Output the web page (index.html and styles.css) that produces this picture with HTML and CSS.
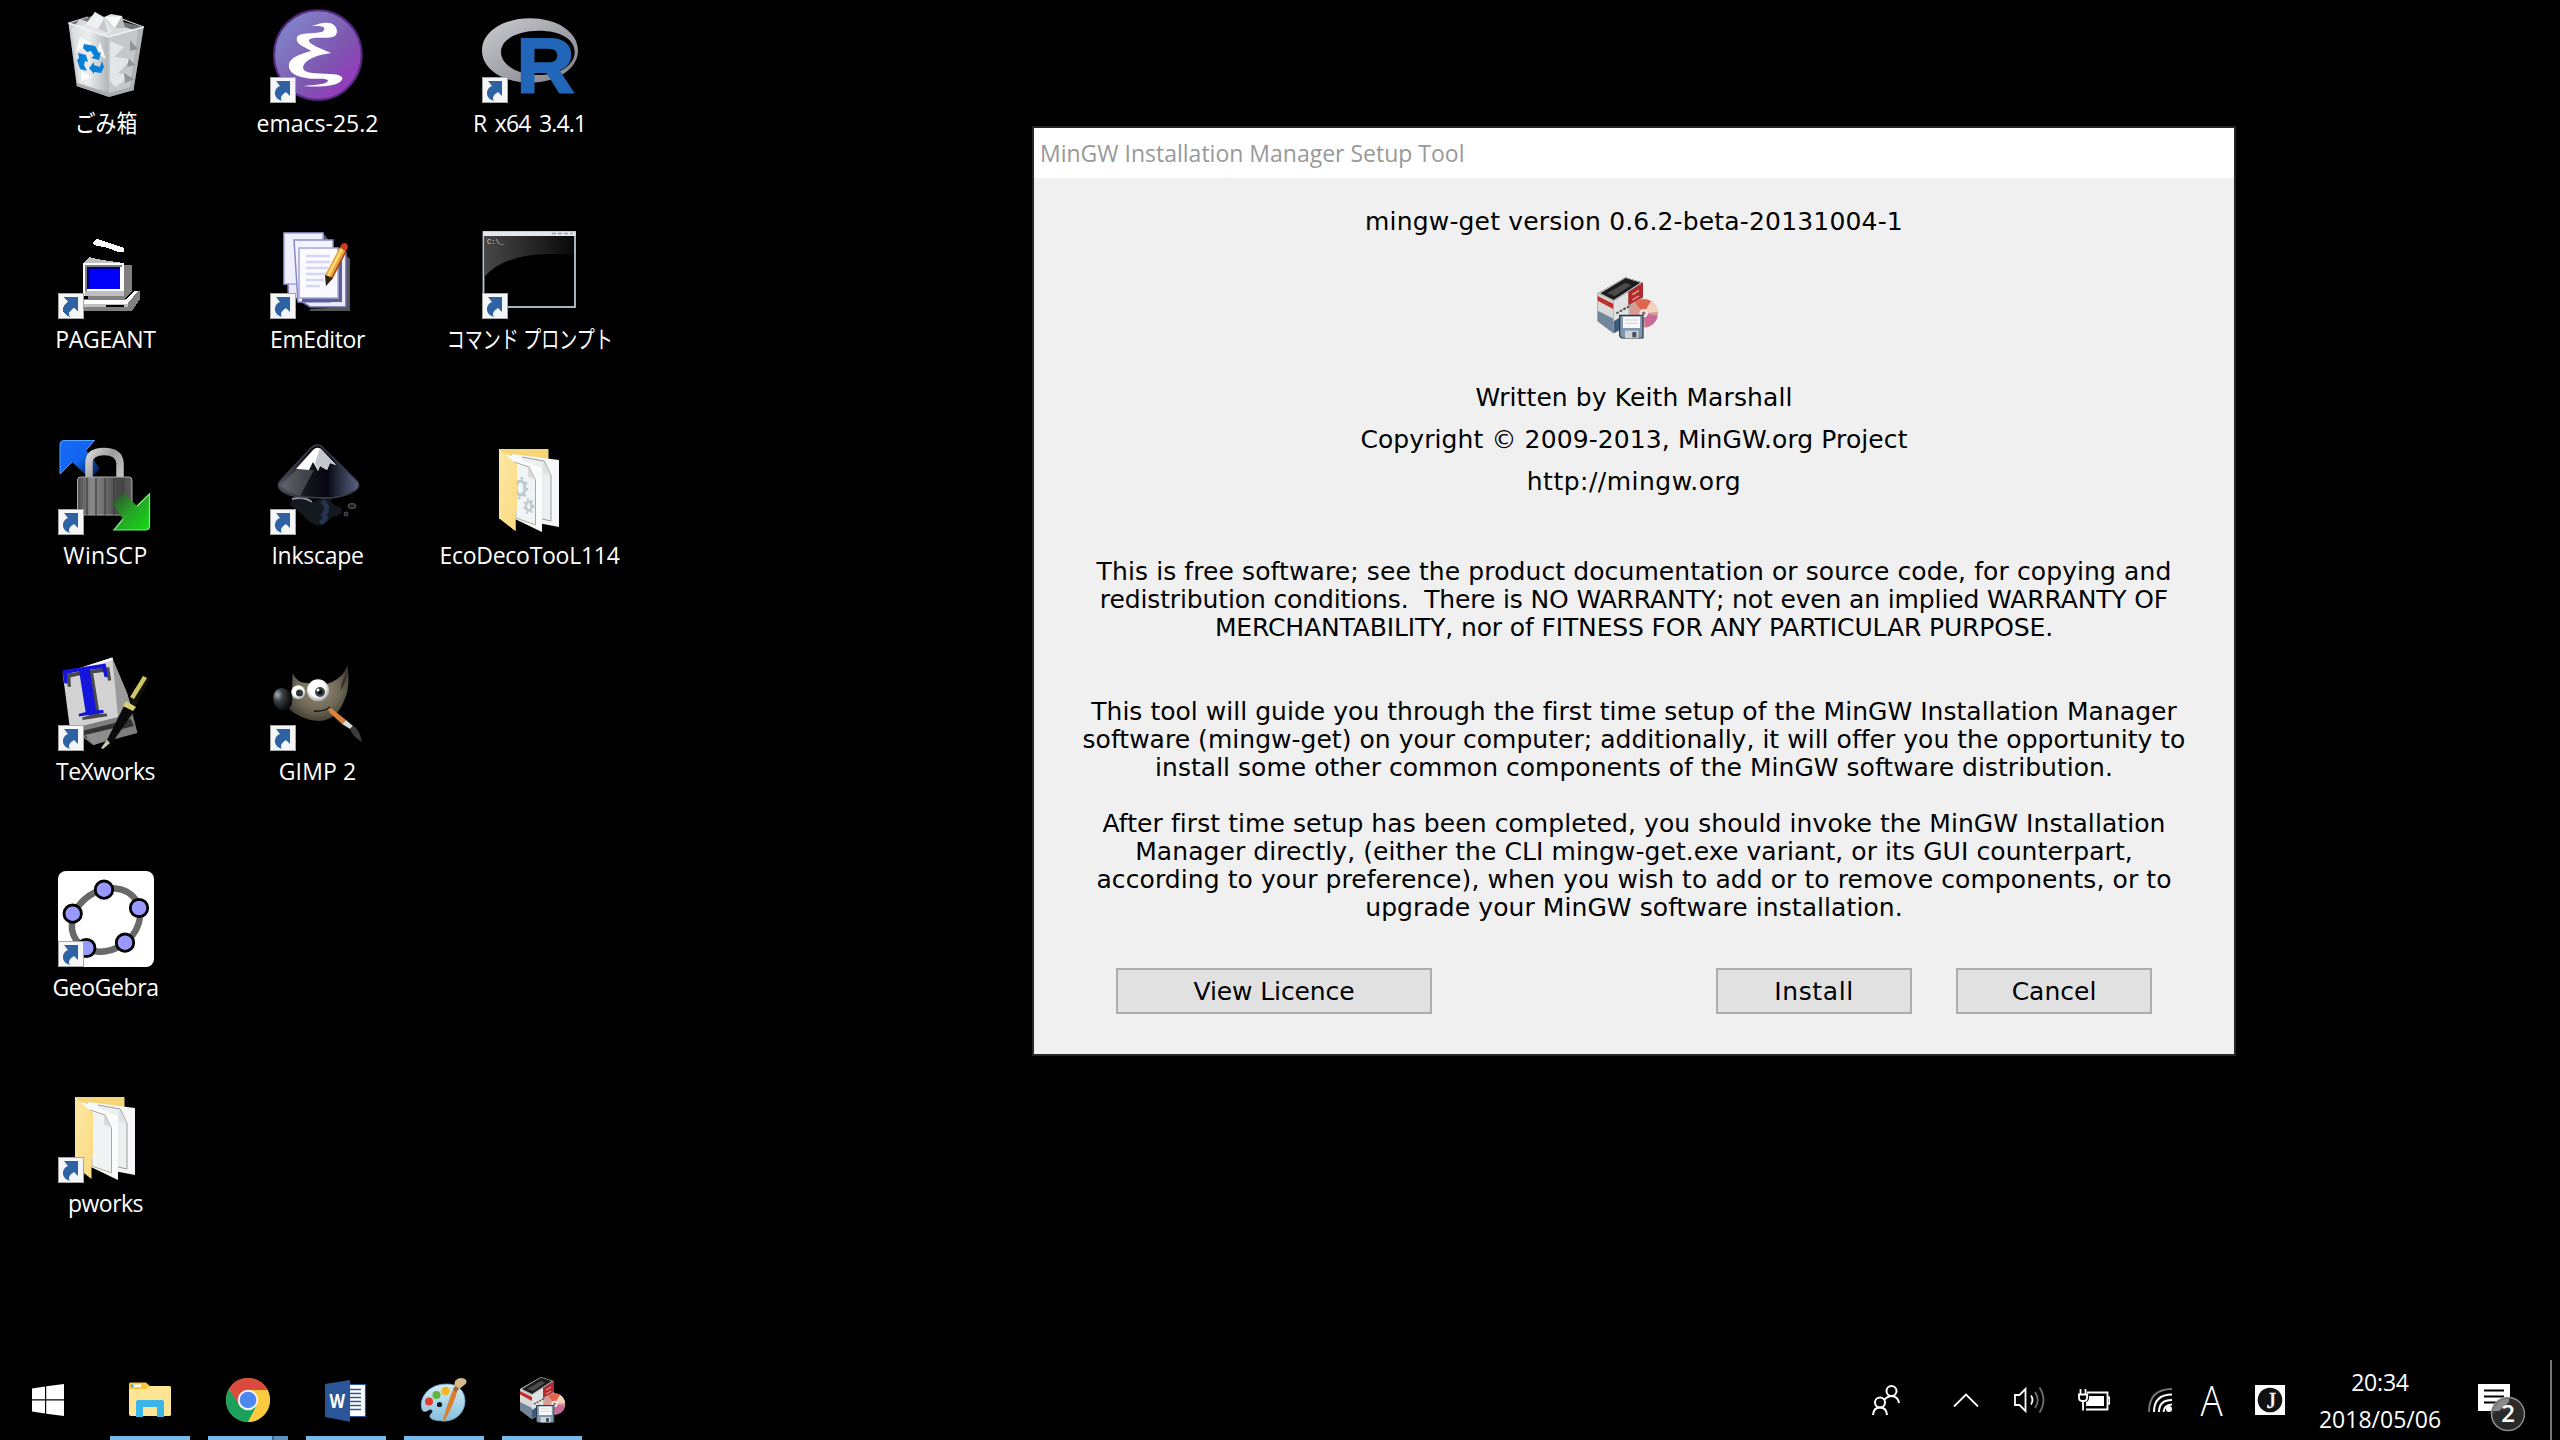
FILE: index.html
```html
<!DOCTYPE html>
<html lang="ja">
<head>
<meta charset="utf-8">
<title>Desktop</title>
<link rel="stylesheet" href="styles.css">
</head>
<body>
<svg class="defs" aria-hidden="true">
  <defs>
    <linearGradient id="flap" x1="0" y1="0" x2="1" y2="1"><stop offset="0" stop-color="#fce8a6"/><stop offset="1" stop-color="#fbda7f"/></linearGradient>
    <linearGradient id="emacsBg" x1="0" y1="0" x2="1" y2="1"><stop offset="0.15" stop-color="#8182c8"/><stop offset="0.6" stop-color="#7e55b0"/><stop offset="0.9" stop-color="#9a35bd"/></linearGradient>
    <linearGradient id="ringGray" x1="0" y1="0" x2="1" y2="1"><stop offset="0" stop-color="#cbcdd2"/><stop offset="1" stop-color="#7d7e86"/></linearGradient>
    <linearGradient id="metal" x1="0" x2="1"><stop offset="0" stop-color="#4c4c4c"/><stop offset="0.25" stop-color="#8a8a8a"/><stop offset="0.5" stop-color="#6d6d6d"/><stop offset="0.75" stop-color="#444"/><stop offset="1" stop-color="#5c5c5c"/></linearGradient>
    <linearGradient id="steel" gradientUnits="userSpaceOnUse" x1="27" y1="10" x2="67" y2="38"><stop offset="0" stop-color="#e2e2e2"/><stop offset="0.5" stop-color="#9d9d9d"/><stop offset="1" stop-color="#c9c9c9"/></linearGradient>
    <linearGradient id="blueArrow" x1="0" y1="0" x2="1" y2="1"><stop offset="0" stop-color="#1a68f5"/><stop offset="0.5" stop-color="#0f66f0"/><stop offset="0.95" stop-color="#031530"/></linearGradient>
    <linearGradient id="greenArrow" x1="0" y1="0" x2="1" y2="1"><stop offset="0.1" stop-color="#2c5a2c"/><stop offset="0.5" stop-color="#27a427"/><stop offset="1" stop-color="#12dd12"/></linearGradient>
    <linearGradient id="ink" x1="0" x2="1"><stop offset="0" stop-color="#55585f"/><stop offset="0.35" stop-color="#15161d"/><stop offset="0.6" stop-color="#05060f"/><stop offset="1" stop-color="#5b6585"/></linearGradient>
    <linearGradient id="cmdShine" x1="0" x2="1"><stop offset="0" stop-color="#474747"/><stop offset="1" stop-color="#080808"/></linearGradient>
    <radialGradient id="fur" cx="0.5" cy="0.45" r="0.6"><stop offset="0" stop-color="#948c76"/><stop offset="0.6" stop-color="#6f6857"/><stop offset="1" stop-color="#3b372d"/></radialGradient>
    <radialGradient id="nose" cx="0.3" cy="0.25" r="0.7"><stop offset="0" stop-color="#aab0b4"/><stop offset="0.4" stop-color="#3b4145"/><stop offset="1" stop-color="#0b0d0e"/></radialGradient>
    <radialGradient id="eye" cx="0.45" cy="0.4" r="0.6"><stop offset="0.6" stop-color="#fff"/><stop offset="1" stop-color="#a9a9a9"/></radialGradient>
    <linearGradient id="bin" x1="0" x2="1"><stop offset="0" stop-color="#d9dcde"/><stop offset="0.5" stop-color="#eef0f1"/><stop offset="1" stop-color="#a9adb0"/></linearGradient>
    <linearGradient id="palette" x1="0" y1="0" x2="0" y2="1"><stop offset="0" stop-color="#d3ebf6"/><stop offset="1" stop-color="#86bfdd"/></linearGradient>

    <symbol id="shortcut" viewBox="0 0 26 26">
      <rect x="0.5" y="0.5" width="25" height="25" fill="#f5f6f8" stroke="#a5a6a8"/>
      <path d="M6 4H20V19L16 15C11 18 10 21 12 24C2 21 4 11 10 9Z" fill="#2f62a3"/>
    </symbol>

    <symbol id="folder" viewBox="0 0 96 96">
      <path d="M17 10H66.500V80H17Z" fill="#f6d576"/>
      <path d="M30 15L77 21V88L35 80Z" fill="#f6f7f8"/>
      <path d="M40 18L62 22L69 36V82L60 80" fill="#eceff0" stroke="#9c9c96" stroke-width="1"/>
      <path d="M61 22L69 36L60 34Z" fill="#dfe2e5"/>
      <path d="M24 15L60 29V93L33 80Z" fill="#fafbfb"/>
      <path d="M32 23L47 28L53.500 41V86L34 79Z" fill="#f1f4f5" stroke="#b0aa90" stroke-width="1"/>
      <path d="M46 28L53.500 41L46 38Z" fill="#d9dcdf"/>
      <path d="M17 10L35 26V69L33.500 71V92L17 79Z" fill="url(#flap)"/>
    </symbol>

    <symbol id="setup" viewBox="0 0 48 48">
      <path d="M2 13L23 1L36 5L36 32L14 43L2 34Z" fill="#1a1a1a"/>
      <path d="M2 13L23 1L35.500 5L14 19Z" fill="#d3d3d3"/>
      <path d="M4 13L23 1.500L34 5L14 18Z" fill="#1c1c1c"/>
      <path d="M9 13L23 5L27 7L15 15Z" fill="#4b4b4b"/>
      <path d="M2 13L14 19V43L2 34Z" fill="#dadada"/>
      <path d="M2 15L14 21V25L2 18.500Z" fill="#bf2f2c"/>
      <path d="M2 26L14 32V43L2 34Z" fill="#71859b"/>
      <path d="M14 19L36 5V31L14 43Z" fill="#b9bcc0"/>
      <path d="M14 19L25 12V36L14 43Z" fill="#e2e2e2"/>
      <path d="M25 12L36 5V16L25 22Z" fill="#b02b2b"/>
      <path d="M28 14L33 11M28 18L33 15" stroke="#e8a8a0" stroke-width="1"/>
      <path d="M14 34L22 29V38L14 43Z" fill="#3d5d7d"/>
      <path d="M16 28L27 22" stroke="#555" stroke-width="1.500" stroke-dasharray="2 1"/>
      <circle cx="36.500" cy="28" r="10.700" fill="#d99a92"/>
      <path d="M36.500 28L30 19.500A10.700 10.700 0 0 1 42 19Z" fill="#e0654d"/>
      <path d="M36.500 28L42 19A10.700 10.700 0 0 1 47 27Z" fill="#f4d3bd"/>
      <path d="M36.500 28L47 30A10.700 10.700 0 0 1 38 38.500Z" fill="#c9699c"/>
      <circle cx="36.500" cy="28" r="3.200" fill="#f3e4e4"/>
      <circle cx="36.500" cy="28" r="1.300" fill="#8a6a6a"/>
      <path d="M18.500 29.500H36V46.500H20L18.500 45Z" fill="#8097b0" stroke="#2d3440" stroke-width="0.900"/>
      <path d="M21 30.500H33.800V39H21Z" fill="#f8f8f8"/>
      <path d="M22.500 33H32M22.500 35.500H32" stroke="#cdcdcd" stroke-width="0.800"/>
      <path d="M22.500 41H32.500V46.500H22.500Z" fill="#cfd3d6"/>
      <path d="M28 42H31V46H28Z" fill="#49515b"/>
    </symbol>
  </defs>
</svg>

<main class="desktop">
  <div class="column">
    <div class="shortcut">
      <svg class="icon" viewBox="0 0 96 96">
        <path d="M10.500 16L37 8L85.700 20L75.500 83L51 90L18.700 79Z" fill="#707376"/>
        <path d="M14 22L22 12L33 16L37 5L46 10L53 7L64 9L66 20L80 24L72 80L51 86L21 76Z" fill="#d8dadb"/>
        <path d="M37 5L46 12L40 22L28 17Z" fill="#f0f1f2"/><path d="M47 10L64 9L57 21Z" fill="#fafafa"/>
        <path d="M57 21L64 9L67 21Z" fill="#b8bbbd"/><path d="M28 17L40 22L46 12L55 24L47 29L20 20Z" fill="#e4e6e7"/>
        <path d="M40 22L46 12L50 26Z" fill="#c6c9cb"/>
        <path d="M10.500 16L50 30L51 89L19 79Z" fill="url(#bin)" opacity="0.85"/>
        <path d="M50 30L85.700 20L75.500 83L51 89Z" fill="#bfc3c6" opacity="0.8"/>
        <path d="M52 34L66 40L56 50L74 52L60 66L73 69L57 80L52 74Z" fill="#e9ebec" opacity="0.85"/>
        <path d="M72 33L80 42L72 44ZM71 51L77 58L69 60ZM66 66L76 72L67 76Z" fill="#8f9497"/>
        <path d="M22 30L33 36L18 45ZM23 64L35 70L23 74ZM42 35L48 52L38 46Z" fill="#fff" opacity="0.8"/>
        <path d="M10.500 16L50 30L85.700 20" fill="none" stroke="#f1f2f3" stroke-width="1.500"/>
        <path d="M10.500 16L30 10M64 12L85.700 20" fill="none" stroke="#cfd1d2" stroke-width="1.200"/>
        <path d="M19 76L51 86L76 80V83L51 90L18.700 79Z" fill="#a9acae"/>
        <g fill="#0a7fd8">
          <path d="M26 37L37 39L41 46L43 45L41 53L33 51L36 49L33 44L29 45L25 41Z"/>
          <path d="M20 46L28 48L30 55L27 54L26 58L29 64L22 62L19 53L21 51Z"/>
          <path d="M31 61L36 55V58L42 60L44 54L46 60L43 66L36 65V67Z"/>
        </g>
      </svg>
      <span class="label"><span class="kanji">ごみ箱</span></span>
    </div>
    <div class="shortcut">
      <svg class="icon" viewBox="0 0 96 96" shape-rendering="crispEdges">
        <path d="M35 19L39 16L52 20L66 25V29H60L50 25L36 22Z" fill="#fff"/>
        <path d="M26 40L31 34L44 37L66 40Z" fill="#c0c0c0"/>
        <path d="M66 42H74V68L66 76H30V70H66Z" fill="#808080"/>
        <path d="M24.500 40H66V73H24.500Z" fill="#fff"/><path d="M26.500 68H66V73H26.500Z" fill="#c0c0c0"/>
        <path d="M26.500 42H64V44H28.500V68H26.500Z" fill="#808080"/>
        <path d="M28.500 44H62V66H28.500Z" fill="#0000f8"/><path d="M28.500 44H62V46H30.500V66H28.500Z" fill="#000080"/>
        <path d="M22 76H68L76 68H82V76L74 88H26V84Z" fill="#808080"/>
        <path d="M24 77H68L76 68H80L70 80V84H24Z" fill="#fff"/><path d="M24 81H70V84H24Z" fill="#c0c0c0"/>
        <path d="M48 82H66V84H48Z" fill="#000"/>
        <use href="#shortcut" x="0" y="70" width="26" height="26"/>
      </svg>
      <span class="label snug-1">PAGEANT</span>
    </div>
    <div class="shortcut">
      <svg class="icon" viewBox="0 0 96 96">
        <path d="M6 1.500H36.500L28 11L42 30L32 40L14 23L2 35V5Q2 1.500 6 1.500Z" fill="url(#blueArrow)"/>
        <path d="M14 23L2 35V5Q2 1.500 6 1.500H36.500L28 11" fill="none" stroke="#5ba5ff" stroke-width="1"/>
        <path d="M31 39V24Q31 12.500 46 12.500Q61 12.500 62 24V39" fill="none" stroke="url(#steel)" stroke-width="7.500"/>
        <rect x="19.500" y="38" width="54.500" height="38" rx="3" fill="url(#metal)" stroke="#aaa" stroke-width="1"/>
        <path d="M29 39V76M38 39V76M47 39V76M56 39V76M65 39V60" stroke="#3c3c3c" stroke-width="2" opacity="0.6"/>
        <path d="M54 64L66 54L79 67L91.500 55V87Q91.500 91 87 91H56L65 80Z" fill="url(#greenArrow)"/>
        <path d="M79 67L91.500 55V87Q91.500 91 87 91H56L65 80" fill="none" stroke="#7df07d" stroke-width="1.200"/>
        <use href="#shortcut" x="0" y="70" width="26" height="26"/>
      </svg>
      <span class="label wide-2">WinSCP</span>
    </div>
    <div class="shortcut">
      <svg class="icon" viewBox="0 0 96 96">
        <path d="M54 2.500L69 38L79.500 78L35 90L12 72Z" fill="#7e7e7e"/>
        <path d="M54 2.500L69 38L74 54L57 63Z" fill="#9b9b9b"/>
        <path d="M4.700 18.500L54.300 2.500L60 62L12 74Z" fill="#d2d2d2"/>
        <path d="M4.700 18.500L54.300 2.500L55 5L6 21Z" fill="#f5f5f5"/>
        <path d="M24 76L73 64L76 71L28 83Z" fill="#333"/><path d="M27 80L56 73L60 80L36 90Z" fill="#8d8d8d"/>
        <g transform="rotate(-9 30 38)">
          <text class="tex-t" x="10" y="64" textLength="46" lengthAdjust="spacingAndGlyphs" fill="#4a4a4a">T</text>
          <text class="tex-t" x="7" y="60" textLength="46" lengthAdjust="spacingAndGlyphs" fill="#1414dd">T</text>
        </g>
        <path d="M73 47L85 20L91 24L77 52Z" fill="#14140f"/>
        <path d="M72 42L85 21L89 23L76 44Z" fill="#cfc65e"/>
        <path d="M78 42L90 24L87 34L80 46Z" fill="#101008"/>
        <path d="M66 51L77 55L54 88L49 85Z" fill="#0a0a0a"/>
        <path d="M68 46L78 52L75 56L65 51Z" fill="#d6cf74"/>
        <path d="M49 85L52 88L45 94L43 93Z" fill="#cfc8b2"/>
        <use href="#shortcut" x="0" y="70" width="26" height="26"/>
      </svg>
      <span class="label snug-3">TeXworks</span>
    </div>
    <div class="shortcut">
      <svg class="icon" viewBox="0 0 96 96">
        <rect width="96" height="96" rx="8" fill="#fff"/>
        <ellipse cx="48" cy="49" rx="36" ry="29.500" transform="rotate(-34 48 49)" fill="none" stroke="#696969" stroke-width="6.500"/>
        <g fill="#9999ff" stroke="#000" stroke-width="2.800">
          <circle cx="46" cy="18.700" r="8.700"/><circle cx="81" cy="37" r="8.700"/><circle cx="67" cy="71.700" r="8.700"/>
          <circle cx="28.300" cy="77" r="8.700"/><circle cx="14.700" cy="42.700" r="8.700"/>
        </g>
        <use href="#shortcut" x="0" y="70" width="26" height="26"/>
      </svg>
      <span class="label snug-2">GeoGebra</span>
    </div>
    <div class="shortcut">
      <svg class="icon" viewBox="0 0 96 96"><use href="#folder"/><use href="#shortcut" x="0" y="70" width="26" height="26"/></svg>
      <span class="label snug-3">pworks</span>
    </div>
  </div>

  <div class="column">
    <div class="shortcut">
      <svg class="icon" viewBox="0 0 96 96">
        <ellipse cx="47.800" cy="48" rx="43.800" ry="44.800" fill="url(#emacsBg)" stroke="#562a83" stroke-width="2"/>
        <path d="M42 19C50 16 55 15 59 16C68 17 70 29 62 30C54 32 42 29 39 33C38 37 50 41 61 46C46 48 34 53 33 60C33 67 46 66 59 67C70 67 76 70 70 75C62 80 48 80 33 79C46 78 56 77 58 74C57 70 46 73 36 71C22 69 18 63 19 57C21 49 35 46 41 44C36 40 25 38 27 30C30 25 42 27 52 25C55 23 56 20 50 19Z" fill="#fff"/>
        <use href="#shortcut" x="0" y="70" width="26" height="26"/>
      </svg>
      <span class="label">emacs-25.2</span>
    </div>
    <div class="shortcut">
      <svg class="icon" viewBox="0 0 96 96">
        <path d="M40 86V88H80V36L76 32V84Z" fill="#55555a"/>
        <path d="M18 30H76V84H40L18 70Z" fill="#e9e9fa" stroke="#6a68a8" stroke-width="1.500"/>
        <path d="M53 10L58 16V60H16L14 61Z" fill="#55547a"/>
        <rect x="14" y="10" width="39" height="51" fill="#f0f0fc" stroke="#a5a4dd" stroke-width="1.500"/>
        <path d="M24 17H63V76L60 79H28Z" fill="#f4f4ff" stroke="#8a89c6" stroke-width="1.500"/>
        <path d="M32 77H70V30" fill="none" stroke="#5f5e92" stroke-width="4"/>
        <rect x="29" y="25" width="39" height="50" fill="#fbfbff" stroke="#a5a4dd" stroke-width="1.500"/>
        <path d="M36 33H60M36 39H60M36 45H58M36 51H56M36 57H54M36 63H50" stroke="#d5d5f5" stroke-width="2.500"/>
        <path d="M56 63L55 52L70 24L76 28L63 55Z" fill="#e8a53a"/>
        <path d="M58 53L72 26" stroke="#f9d978" stroke-width="2.500"/><path d="M62 55L76 28" stroke="#a83b1c" stroke-width="1.500"/>
        <path d="M55 52L63 55L56 63Z" fill="#2f2414"/>
        <path d="M70 24Q73 18 77 21Q79 24 76 28Z" fill="#cf3b25"/>
        <use href="#shortcut" x="0" y="70" width="26" height="26"/>
      </svg>
      <span class="label snug-2">EmEditor</span>
    </div>
    <div class="shortcut">
      <svg class="icon" viewBox="0 0 96 96">
        <path d="M22 60Q36 58 40 64L62 56Q58 66 70 68Q76 76 62 78Q54 88 46 86Q36 82 33 76L20 66Z" fill="#14181f"/>
        <path d="M52 62Q60 68 54 76Q58 80 50 84" fill="none" stroke="#263450" stroke-width="5"/>
        <path d="M22 60Q34 57 42 63" fill="none" stroke="#8c9097" stroke-width="2"/>
        <path d="M47.500 6Q51 6 54 10L87 42Q91 47 86 51Q76 57 62 59Q40 59 24 57Q12 54 9 49Q7 45 11 41L41 9Q44 6 47.500 6Z" fill="url(#ink)" stroke="#3a3e4c" stroke-width="1.500"/>
        <path d="M30 57L44 31L26 31L11 46Q16 54 30 57Z" fill="#777a82" opacity="0.45"/>
        <path d="M26 30L43 11Q47.500 6.500 52 11L66 26L60 24L57 31L50 27L48 32L43 23L39 31Z" fill="#fff"/>
        <path d="M50 9L66 26L60 24L57 31L50 27L48 32L45 24Z" fill="#c4c7cc"/>
        <ellipse cx="82" cy="67" rx="4" ry="2.500" fill="#20232a" stroke="#6b6e75" stroke-width="0.800"/>
        <circle cx="76" cy="75" r="2" fill="#2a2d34" stroke="#55585e" stroke-width="0.800"/>
        <use href="#shortcut" x="0" y="70" width="26" height="26"/>
      </svg>
      <span class="label snug-1">Inkscape</span>
    </div>
    <div class="shortcut">
      <svg class="icon" viewBox="0 0 96 96">
        <path d="M22.500 18Q27 28 37 28Q50 33 62 27Q73 22 77.500 10.500Q81 32 74 46Q66 66 48 66Q30 65 17 52L22 40Z" fill="url(#fur)"/>
        <path d="M77 16Q76 29 70 36Q72 26 77 16Z" fill="#332f27"/>
        <ellipse cx="12.700" cy="44.300" rx="9.500" ry="11.500" transform="rotate(-15 12.700 44.300)" fill="url(#nose)"/>
        <circle cx="28.300" cy="37.300" r="7" fill="url(#eye)"/><circle cx="48" cy="35.300" r="11" fill="url(#eye)"/>
        <circle cx="29.500" cy="38" r="3.500" fill="#303638"/><circle cx="50" cy="37" r="5" fill="#3a4446"/><circle cx="50" cy="37" r="2.500" fill="#111"/>
        <circle cx="48" cy="35" r="1.500" fill="#fff"/>
        <path d="M44 56Q54 57 60 52" fill="none" stroke="#1d1a14" stroke-width="1.500"/>
        <path d="M58 54L61 53L76 65L72 69L60 58Z" fill="#d8843a"/>
        <path d="M72 69L76 65L83 71L80 74Z" fill="#d9dadb"/>
        <path d="M80 74L84 71Q90 76 92 87Q83 82 80 74Z" fill="#3c3c3c"/>
        <use href="#shortcut" x="0" y="70" width="26" height="26"/>
      </svg>
      <span class="label wide-1">GIMP 2</span>
    </div>
  </div>

  <div class="column">
    <div class="shortcut">
      <svg class="icon" viewBox="0 0 96 96">
        <path fill-rule="evenodd" d="M48 11.300C75 11.300 96 25 96 43.500C96 62 75 75.700 48 75.700C21 75.700 0 62 0 43.500C0 25 21 11.300 48 11.300ZM57 23.700C36 23.700 19 32 19 45C19 58 36 68 57 68C78 68 92.700 58 92.700 45C92.700 32 78 23.700 57 23.700Z" fill="url(#ringGray)"/>
        <text class="r-letter" x="34.500" y="85" textLength="58" lengthAdjust="spacingAndGlyphs">R</text>
        <use href="#shortcut" x="0" y="70" width="26" height="26"/>
      </svg>
      <span class="label words">R x64 3.4.1</span>
    </div>
    <div class="shortcut">
      <svg class="icon" viewBox="0 0 96 96">
        <rect x="1.500" y="9" width="91.500" height="75" fill="#000" stroke="#bcc5d2" stroke-width="1.800"/>
        <path d="M1 8.500H93.500V13H1Z" fill="#e3e8ee"/><path d="M70 10.500H91" stroke="#9aa2ad" stroke-width="1.500" stroke-dasharray="4 2"/>
        <path d="M3 13H92V32Q28 26 3 53Z" fill="url(#cmdShine)"/>
        <text class="cmd-prompt" x="5" y="21">C:\_</text>
        <use href="#shortcut" x="0" y="70" width="26" height="26"/>
      </svg>
      <span class="label"><span class="kana">コマンド プロンプト</span></span>
    </div>
    <div class="shortcut">
      <svg class="icon" viewBox="0 0 96 96"><use href="#folder"/>
        <g fill="none" stroke="#bcc9d1"><ellipse cx="38.500" cy="49" rx="4.500" ry="7" stroke-width="3"/><ellipse cx="38.500" cy="49" rx="6.500" ry="10" stroke-width="2.500" stroke-dasharray="2.500 4"/>
        <ellipse cx="46.800" cy="67" rx="2.800" ry="4.500" stroke-width="2.500"/><ellipse cx="46.800" cy="67" rx="4.500" ry="7" stroke-width="2" stroke-dasharray="2 3"/></g>
        <path d="M17 10L35 26V69L33.500 71V92L17 79Z" fill="url(#flap)"/>
      </svg>
      <span class="label snug-1">EcoDecoTooL114</span>
    </div>
  </div>
</main>

<section class="dialog">
  <header class="dialog-title">MinGW Installation Manager Setup Tool</header>
  <div class="dialog-body">
    <p class="version">mingw-get version 0.6.2-beta-20131004-1</p>
    <svg class="setup-icon" viewBox="0 0 48 48"><use href="#setup"/></svg>
    <div class="credits">
      <p>Written by Keith Marshall</p>
      <p>Copyright © 2009-2013, MinGW.org Project</p>
      <p class="url">http://mingw.org</p>
    </div>
    <p class="notice">
      This is free software; see the product documentation or source code, for copying and<br>
      <span class="caps">redistribution conditions.&nbsp; There is NO WARRANTY; not even an implied WARRANTY OF<br>
      MERCHANTABILITY, nor of FITNESS FOR ANY PARTICULAR PURPOSE.</span>
    </p>
    <p class="guide">
      This tool will guide you through the first time setup of the MinGW Installation Manager<br>
      software (mingw-get) on your computer; additionally, it will offer you the opportunity to<br>
      install some other common components of the MinGW software distribution.
    </p>
    <p class="after">
      After first time setup has been completed, you should invoke the MinGW Installation<br>
      Manager directly, (either the CLI mingw-get.exe variant, or its GUI counterpart,<br>
      according to your preference), when you wish to add or to remove components, or to<br>
      upgrade your MinGW software installation.
    </p>
    <div class="actions">
      <button class="btn btn-wide">View Licence</button>
      <button class="btn btn-install">Install</button>
      <button class="btn">Cancel</button>
    </div>
  </div>
</section>

<footer class="taskbar">
  <div class="start">
    <svg width="32" height="32" viewBox="0 0 32 32" fill="#fff"><path d="M0 4.500L13 2.500V15.300H0ZM14.200 2.300L32 0V15.300H14.200ZM0 16.500H13V29.500L0 27.500ZM14.200 16.500H32V32L14.200 29.700Z"/></svg>
  </div>
  <div class="apps">
    <div class="app">
      <svg viewBox="0 0 48 48"><path d="M3 8Q3 6.500 4.500 6.500H20L24 10H43Q45 10 45 12V20H3Z" fill="#fcc638"/><path d="M3 13H20L24 10H43Q45 10 45 12V39Q45 40 43 40H5Q3 40 3 38Z" fill="#ffe593"/><path d="M5 8.500H15V11H5Z" fill="#fff"/><path d="M5 8.500H7.500V11H5Z" fill="#2fa5e0"/><path d="M10 26Q10 24 12 24H36Q38 24 38 26V41H31V31H17V41H10Z" fill="#3bb5e8"/></svg>
    </div>
    <div class="app stacked">
      <svg viewBox="0 0 48 48"><circle cx="24" cy="24" r="22" fill="#fbc73a"/><path d="M24 24V14H43.500A22 22 0 0 0 4.950 13L14.500 29Z" fill="#db4a3c"/><path d="M4.950 13A22 22 0 0 0 24 46L33 29L24 34L15 29Z" fill="#1aa15c"/><path d="M33 29L24 46A22 22 0 0 0 43.500 14H24Z" fill="#fcca3e"/><circle cx="24" cy="24" r="10.300" fill="#f3f3f3"/><circle cx="24" cy="24" r="8.300" fill="#4a87ee"/></svg>
    </div>
    <div class="app">
      <svg viewBox="0 0 48 48"><path d="M26 8.500H43.500V40.500H26Z" fill="#fff" stroke="#2b579a" stroke-width="1.200"/><path d="M28 13.500H39M28 17.500H39M28 21.500H39M28 25.500H39M28 29.500H39M28 33.500H39" stroke="#2b579a" stroke-width="1.700"/><path d="M3 8L28 4V45.700L3 41Z" fill="#2b579a"/><text class="word-w" x="7.500" y="31.500" textLength="15.500" lengthAdjust="spacingAndGlyphs">W</text></svg>
    </div>
    <div class="app">
      <svg viewBox="0 0 48 48"><path d="M27 8C38 8 45 15 45 25C45 36 36 45 25 45C18 45 11 44 10 41C9 38 14 37 12 34C9 32 7 37 3 35C-2 29 3 8 27 8Z" fill="url(#palette)" stroke="#6ea4c4" stroke-width="0.800"/><circle cx="19.500" cy="28.500" r="2.600" fill="#0c1a26"/><circle cx="9" cy="25.500" r="4" fill="#df3f2c"/><circle cx="16.500" cy="19" r="4" fill="#63b53b"/><circle cx="25.500" cy="15" r="4.200" fill="#f3b81f"/><path d="M34 11L38 13Q34 28 24 46L22.500 45Q28 26 34 11Z" fill="#d9812f"/><path d="M35 5Q39 0 45 3Q49 6 43 10L38 14L34 11Z" fill="#d8b98a"/><path d="M33 13L36 10L39 13L36 16Z" fill="#9a6a3a"/></svg>
    </div>
    <div class="app">
      <svg viewBox="0 0 48 48"><use href="#setup"/></svg>
    </div>
  </div>
  <div class="tray">
    <div class="tray-item w80"><svg width="28" height="30" viewBox="0 0 28 30" fill="none" stroke="#fff" stroke-width="2"><circle cx="19.500" cy="6" r="5"/><path d="M12 15Q16 11 19.500 11Q26 11.500 27 18"/><circle cx="8" cy="17.500" r="5"/><path d="M1 30Q1.500 22.500 8 22.500Q14.500 22.500 15 30"/></svg></div>
    <div class="tray-item w80"><svg width="26" height="14" viewBox="0 0 26 14" fill="none" stroke="#fff" stroke-width="1.800"><path d="M1 13.500L13 1.500L25 13.500"/></svg></div>
    <div class="tray-item w48"><svg width="32" height="28" viewBox="0 0 32 28" fill="none" stroke="#fff" stroke-width="1.800"><path d="M1 9H5.500L11.500 3V25L5.500 19H1Z"/><path d="M17 9.500Q20 14 17 18.500"/><path d="M21 6Q26.500 14 21 22M25.500 1.500Q33.500 14 25.500 26.500" stroke="#707070"/></svg></div>
    <div class="tray-item w80"><svg width="32" height="24" viewBox="0 0 32 24" fill="none" stroke="#fff" stroke-width="1.800"><path d="M9 4.500H29.500V21.500H8"/><path d="M11 8H26V18H8V14Q11 13 11 10Z" fill="#fff" stroke="none"/><path d="M30 9.500H31.500V15.500H30"/><path d="M2.500 1V6M7.500 1V6M0 6.500H10M1 6.500V10Q1 13 5 13Q9 13 9 10V6.500M5 13V22.500"/></svg></div>
    <div class="tray-item w52"><svg width="24" height="26" viewBox="0 0 24 26" fill="none" stroke="#fff" stroke-width="2"><path d="M1 25Q1 2 24 2" stroke="#777"/><path d="M6 25Q6 7.500 24 7.500M11 25Q11 13 24 13M15.500 25Q16 18 24 17.500"/><circle cx="21" cy="22" r="3" fill="#fff" stroke="none"/></svg></div>
    <div class="tray-item w52"><span class="ime">A</span></div>
    <div class="tray-item w64"><svg width="30" height="30" viewBox="0 0 30 30"><rect width="30" height="30" fill="#fff"/><circle cx="15" cy="15" r="12.300" fill="#111"/><text class="ime-j" x="12" y="22.500">J</text></svg></div>
    <div class="clock"><span class="time">20:34</span><span>2018/05/06</span></div>
    <div class="action">
      <svg width="48" height="50" viewBox="0 0 48 50"><path d="M1 1H33V28H20L14 35L14 28H1Z" fill="#fff"/><path d="M7 7.500H27M7 13.500H27M7 19.500H20" stroke="#000" stroke-width="2"/><circle cx="31" cy="31" r="16.500" fill="#2b2b2b" fill-opacity="0.95" stroke="#8f8f8f" stroke-width="1.500"/><path d="M15.500 28A16 16 0 0 1 32 15.500V19L22 28Z" fill="#8a8a8a"/><text class="badge" x="31" y="39">2</text></svg>
    </div>
    <div class="show-desktop"></div>
  </div>
</footer>
</body>
</html>
```
FILE: styles.css
```css
* { box-sizing: border-box; }
body { margin: 0; width: 2560px; height: 1440px; overflow: hidden; background: #000; color: #fff; font-family: "Open Sans", "Noto Sans CJK JP", sans-serif; font-size: 23px; display: flex; flex-direction: column; }
p { margin: 0; }
.defs { position: absolute; width: 0; height: 0; }

/* Desktop shortcuts */
.desktop { display: flex; height: 1360px; }
.column { width: 212px; }
.shortcut { height: 216px; padding-top: 7px; display: flex; flex-direction: column; align-items: center; gap: 4px; }
.icon { width: 96px; height: 96px; display: block; flex: none; overflow: visible; }
.label { line-height: 32px; white-space: nowrap; padding-right: 1px; }
.snug-1 { letter-spacing: -0.27px; }
.snug-2 { letter-spacing: -0.4px; }
.snug-3 { letter-spacing: -0.5px; }
.wide-1 { letter-spacing: 0.1px; }
.wide-2 { letter-spacing: 0.38px; }
.words { letter-spacing: -0.9px; word-spacing: 3.5px; }
.kanji, .kana { display: inline-block; font-size: 24px; }
.kanji { transform: scaleX(0.87); }
.kana { transform: scaleX(0.75); }
.r-letter { font: bold 77px "Liberation Sans", sans-serif; fill: #2166b8; stroke: #2166b8; stroke-width: 2; }
.tex-t { font: bold 74px "Liberation Serif", serif; }
.cmd-prompt { font: 7px "Liberation Mono", monospace; fill: #ddd; }
.word-w { font: bold 20px "Open Sans", sans-serif; fill: #fff; }

/* Setup dialog */
.dialog { position: absolute; left: 1032px; top: 126px; width: 1204px; height: 930px; border: 2px solid #262626; background: #f0f0f0; color: #000; display: flex; flex-direction: column; font-family: "DejaVu Sans", sans-serif; font-size: 25px; }
.dialog-title { height: 50px; padding-left: 6px; background: #fff; color: #999; font-family: "Open Sans", sans-serif; font-size: 23px; line-height: 50px; white-space: nowrap; }
.dialog-body { flex: 1; padding-top: 30px; display: flex; flex-direction: column; align-items: center; text-align: center; line-height: 28px; white-space: nowrap; }
.version { letter-spacing: 0.17px; }
.setup-icon { width: 64px; height: 64px; margin: 40px 14px 37px 0; }
.credits { line-height: 42px; letter-spacing: 0.1px; }
.url { letter-spacing: 0.48px; }
.notice { margin-top: 55px; letter-spacing: 0.1px; }
.caps { letter-spacing: -0.13px; }
.guide { margin-top: 56px; letter-spacing: 0.03px; }
.after { margin-top: 28px; letter-spacing: 0.08px; }
.actions { align-self: stretch; display: flex; gap: 44px; margin-top: 46px; padding: 0 82px; }
.btn { width: 196px; height: 46px; padding: 2px 0 0; border: 2px solid #adadad; background: #e1e1e1; color: #000; font: 25px/28px "DejaVu Sans", sans-serif; }
.btn-wide { width: 316px; margin-right: auto; letter-spacing: -0.1px; }
.btn-install { letter-spacing: 0.6px; }

/* Taskbar */
.taskbar { height: 80px; display: flex; }
.start { width: 110px; padding: 24px 0 0 32px; }
.apps { display: flex; gap: 18px; }
.app { width: 80px; height: 80px; padding-top: 16px; border-bottom: 4px solid #76b9ed; display: flex; justify-content: center; }
.app svg { width: 48px; height: 48px; }
.stacked { border-image: linear-gradient(90deg, #76b9ed 62px, #41698a 62px, #41698a 63px, #5c92bd 63px) 4; border-image-width: 0 0 4px 0; }
.tray { margin-left: auto; display: flex; }
.tray-item { display: flex; align-items: center; justify-content: center; }
.w48 { width: 48px; }
.w52 { width: 52px; }
.w64 { width: 64px; }
.w80 { width: 80px; }
.ime { font-size: 42px; font-weight: 300; line-height: 80px; transform: scaleX(0.88); }
.ime-j { font: 23px "Liberation Serif", serif; fill: #fff; stroke: #fff; stroke-width: 0.5; }
.clock { width: 156px; display: flex; flex-direction: column; align-items: center; padding-top: 4px; line-height: 37px; white-space: nowrap; }
.time { letter-spacing: -0.2px; }
.action { width: 86px; padding: 23px 0 0 19px; }
.badge { font: 600 24px "Open Sans", sans-serif; fill: #fff; text-anchor: middle; }
.show-desktop { width: 2px; margin: 0 8px 0 6px; background: #777; }
```
